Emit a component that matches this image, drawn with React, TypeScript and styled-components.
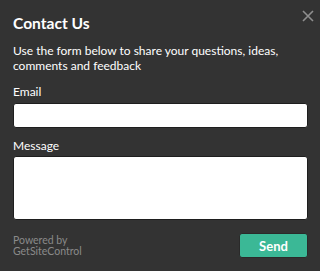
import React from "react";
import styled, { createGlobalStyle } from "styled-components";

const Global = createGlobalStyle`
  html, body { margin: 0; padding: 0; background: #333333; }
  * { box-sizing: border-box; }
`;

const Panel = styled.div`
  position: relative;
  width: 320px;
  height: 271px;
  background: #333333;
  padding: 13px 12px 0 13px;
  font-family: "Lato", "Open Sans", sans-serif;
  color: #ffffff;
  display: flex;
  flex-direction: column;
`;

const Close = styled.button`
  position: absolute;
  top: 10px;
  right: 6px;
  width: 12px;
  height: 12px;
  padding: 0;
  border: 0;
  background: transparent;
  cursor: pointer;
  display: flex;
`;

const Title = styled.h1`
  margin: 0;
  font-size: 15.6px;
  font-weight: 700;
  line-height: 20px;
`;

const Description = styled.p`
  margin: 10px 0 0;
  font-size: 12px;
  line-height: 15px;
`;

const Field = styled.label`
  display: flex;
  flex-direction: column;
  margin-top: ${(p: { $top: number }) => p.$top}px;
`;

const Label = styled.span`
  font-size: 12px;
  line-height: 15px;
  margin-bottom: ${(p: { $gap: number }) => p.$gap}px;
`;

const Input = styled.input`
  height: 25px;
  width: 100%;
  border: 1px solid #1e1e1e;
  border-radius: 3px;
  background: #ffffff;
  outline: none;
`;

const TextArea = styled.textarea`
  display: block;
  height: 64px;
  width: 100%;
  border: 1px solid #1e1e1e;
  border-radius: 3px;
  background: #ffffff;
  resize: none;
  outline: none;
`;

const Footer = styled.div`
  display: flex;
  justify-content: space-between;
  align-items: center;
  margin-top: 13px;
`;

const Powered = styled.div`
  font-size: 10.5px;
  line-height: 11px;
  color: #8a8a8a;
`;

const SendButton = styled.button`
  width: 69px;
  height: 25px;
  border: 1px solid #2a2a2a;
  border-radius: 3px;
  background: #3bb896;
  color: #ffffff;
  font-family: "Lato", "Open Sans", sans-serif;
  font-size: 13px;
  font-weight: 700;
  cursor: pointer;
`;

export default function App() {
  return (
    <>
      <Global />
      <Panel>
        <Close aria-label="Close">
          <svg width="12" height="12" viewBox="0 0 12 12">
            <path d="M1 1L11 11M11 1L1 11" stroke="#8f8f8f" strokeWidth="1.6" />
          </svg>
        </Close>
        <Title>Contact Us</Title>
        <Description>
          Use the form below to share your questions, ideas, comments and feedback
        </Description>
        <Field $top={11}>
          <Label $gap={4}>Email</Label>
          <Input type="email" />
        </Field>
        <Field $top={10}>
          <Label $gap={3}>Message</Label>
          <TextArea />
        </Field>
        <Footer>
          <Powered>
            Powered by
            <br />
            GetSiteControl
          </Powered>
          <SendButton>Send</SendButton>
        </Footer>
      </Panel>
    </>
  );
}
